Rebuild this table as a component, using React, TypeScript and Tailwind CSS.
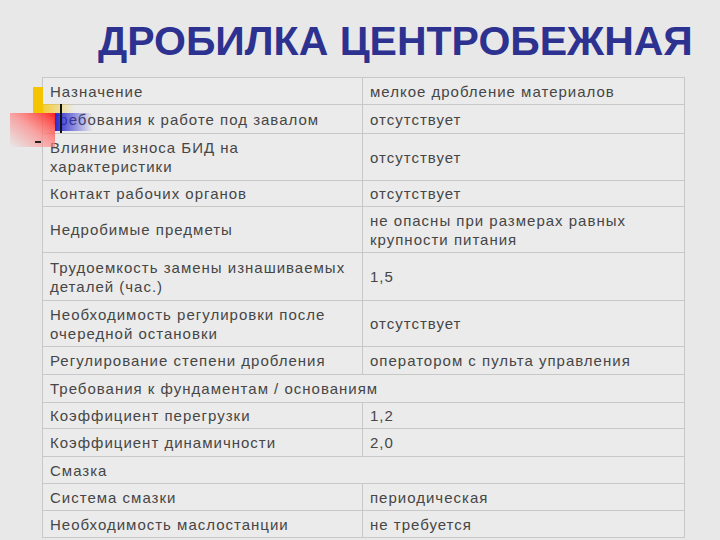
import React from "react";

type Row = { l: string; r?: string; h: number; span?: boolean };

const rows: Row[] = [
  { l: "Назначение", r: "мелкое дробление материалов", h: 27 },
  { l: "Требования к работе под завалом", r: "отсутствует", h: 29 },
  { l: "Влияние износа БИД на характеристики", r: "отсутствует", h: 47 },
  { l: "Контакт рабочих органов", r: "отсутствует", h: 26 },
  { l: "Недробимые предметы", r: "не опасны при размерах равных крупности питания", h: 46 },
  { l: "Трудоемкость замены изнашиваемых деталей (час.)", r: "1,5", h: 48 },
  { l: "Необходимость регулировки после очередной остановки", r: "отсутствует", h: 46 },
  { l: "Регулирование степени дробления", r: "оператором с пульта управления", h: 28 },
  { l: "Требования к фундаментам / основаниям", h: 28, span: true },
  { l: "Коэффициент перегрузки", r: "1,2", h: 26 },
  { l: "Коэффициент динамичности", r: "2,0", h: 28 },
  { l: "Смазка", h: 27, span: true },
  { l: "Система смазки", r: "периодическая", h: 27 },
  { l: "Необходимость маслостанции", r: "не требуется", h: 27 },
];

const cell = "border border-[#c8c8c8] pl-[7px] pr-[4px] py-0 align-middle";

export default function App() {
  return (
    <div
      className="relative flex flex-col w-[720px] h-[540px] overflow-hidden bg-[#e8e8e8]"
      style={{ fontFamily: '"Liberation Sans", Arial, sans-serif' }}
    >
      <div className="h-[77px] pl-[98px] pt-[21px]">
        <h1 className="text-[41px] leading-[41px] font-bold text-[#2d3190] whitespace-nowrap">
          ДРОБИЛКА ЦЕНТРОБЕЖНАЯ
        </h1>
      </div>
      <div className="pl-[42px]">
        <table className="w-[642px] border-collapse table-fixed text-[15px] leading-[19px] tracking-[1px] text-[#464646]">
          <colgroup>
            <col className="w-[320px]" />
            <col className="w-[322px]" />
          </colgroup>
          <tbody>
            {rows.map((row, i) => (
              <tr key={i} style={{ height: row.h }} className="bg-[#ebebeb]">
                {row.span ? (
                  <td colSpan={2} className={cell}>
                    {row.l}
                  </td>
                ) : (
                  <>
                    <td className={cell}>{row.l}</td>
                    <td className={cell}>{row.r}</td>
                  </>
                )}
              </tr>
            ))}
          </tbody>
        </table>
      </div>
      {/* decorative logo */}
      <div className="absolute left-[10px] top-[87px] w-[85px] h-[60px] pointer-events-none">
        <div className="absolute left-[23px] top-0 w-[10px] h-[26px] bg-[#f5c400]" />
        <div className="absolute left-[23px] top-[17px] w-[42px] h-[9px] bg-gradient-to-r from-[#f5c400] to-[#f5c40000]" />
        <div className="absolute left-0 top-[26px] w-[45px] h-[34px] bg-gradient-to-bl from-[#ff2020] via-[#ff8080aa] to-[#ffffff00]" />
        <div className="absolute left-[45px] top-[26px] w-[38px] h-[18px] bg-gradient-to-r from-[#2a2ad0] to-[#2a2ad000]" />
        <div className="absolute left-[50px] top-[17px] w-[2px] h-[29px] bg-[#111]" />
        <div className="absolute left-[25px] top-[54px] w-[6px] h-[2px] bg-[#222]" />
      </div>
    </div>
  );
}
